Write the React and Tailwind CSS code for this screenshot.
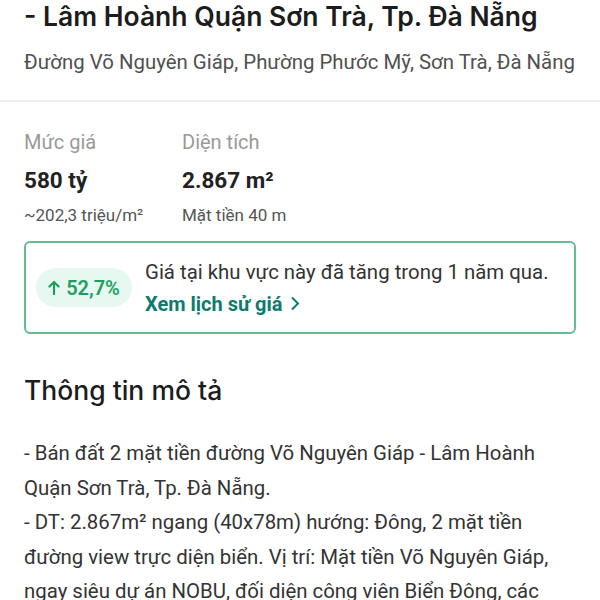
export default function App() {
  return (
    <div className="w-[600px] h-[600px] overflow-hidden bg-white font-['Roboto',sans-serif] text-[#222]">
      {/* Header */}
      <div className="px-6">
        <h1 className="font-['Inter',sans-serif] font-semibold text-[26.5px] leading-[32px] text-[#1c1c1c] whitespace-nowrap">
          - Lâm Hoành Quận Sơn Trà, Tp. Đà Nẵng
        </h1>
        <p className="mt-[16px] text-[20.4px] leading-[28px] text-[#505050] whitespace-nowrap">
          Đường Võ Nguyên Giáp, Phường Phước Mỹ, Sơn Trà, Đà Nẵng
        </p>
      </div>
      <div className="mt-[24px] h-[2px] bg-[#eeeeee]" />

      {/* Price / area */}
      <div className="px-6 pt-[27px] flex">
        <div className="w-[158px]">
          <p className="text-[20px] leading-[26px] text-[#999]">Mức giá</p>
          <p className="mt-[11px] text-[22.5px] leading-[28px] font-bold text-[#222]">580 tỷ</p>
          <p className="mt-[9px] text-[17px] leading-[24px] text-[#555]">~202,3 triệu/m²</p>
        </div>
        <div>
          <p className="text-[20px] leading-[26px] text-[#999]">Diện tích</p>
          <p className="mt-[11px] text-[22.5px] leading-[28px] font-bold text-[#222]">2.867 m²</p>
          <p className="mt-[9px] text-[17px] leading-[24px] text-[#555]">Mặt tiền 40 m</p>
        </div>
      </div>

      {/* Price trend */}
      <div className="mx-6 mt-[14px] h-[93px] border-2 border-[#62bd93] rounded-[6px] flex items-center pl-[10px] pr-3 gap-[13px]">
        <span className="w-[96px] h-[39px] rounded-full bg-[#e6f8ef] text-[#1f9e62] text-[20px] font-semibold flex items-center justify-center gap-[6px] whitespace-nowrap">
          <svg width="12" height="15" viewBox="0 0 12 15" fill="none" stroke="currentColor" strokeWidth="2.2" strokeLinecap="round" strokeLinejoin="round">
            <path d="M6 14 V2 M1.5 6.5 L6 2 L10.5 6.5" />
          </svg>
          52,7%
        </span>
        <div>
          <p className="text-[20.4px] leading-[28px] text-[#333] whitespace-nowrap">Giá tại khu vực này đã tăng trong 1 năm qua.</p>
          <p className="mt-[4px] text-[20px] leading-[28px] font-bold text-[#0f7b6f] flex items-center gap-[7px]">
            Xem lịch sử giá
            <svg width="10" height="15" viewBox="0 0 10 15" fill="none" stroke="currentColor" strokeWidth="2">
              <path d="M2 1.5 L8 7.5 L2 13.5" />
            </svg>
          </p>
        </div>
      </div>

      {/* Description */}
      <div className="px-6 pt-[39px]">
        <h2 className="font-['Inter',sans-serif] text-[26.5px] leading-[34px] font-medium text-[#1c1c1c]">Thông tin mô tả</h2>
        <div className="mt-[29px] text-[20.4px] leading-[34.5px] text-[#333]">
          <p>- Bán đất 2 mặt tiền đường Võ Nguyên Giáp - Lâm Hoành Quận Sơn Trà, Tp. Đà Nẵng.</p>
          <p>- DT: 2.867m² ngang (40x78m) hướng: Đông, 2 mặt tiền đường view trực diện biển. Vị trí: Mặt tiền Võ Nguyên Giáp, ngay siêu dự án NOBU, đối diện công viên Biển Đông, các</p>
        </div>
      </div>
    </div>
  );
}
